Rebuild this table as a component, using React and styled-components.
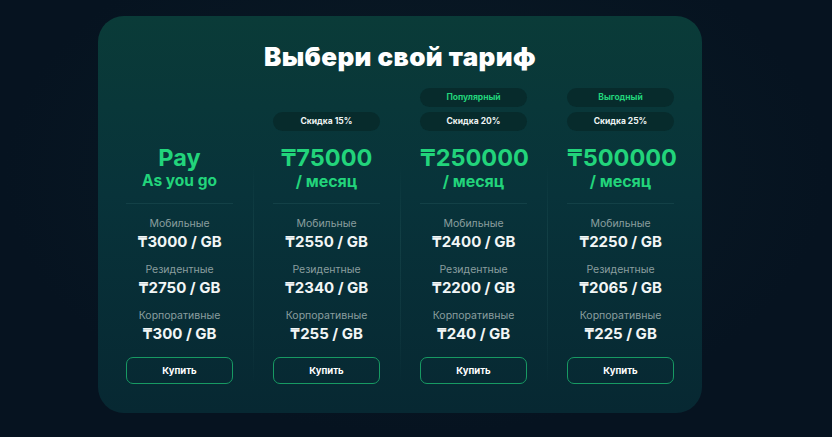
import React from "react";
import styled, { createGlobalStyle } from "styled-components";

const Global = createGlobalStyle`
  html, body { margin: 0; padding: 0; }
  body {
    background: #061423;
    font-family: Inter, "Noto Sans", "DejaVu Sans", sans-serif;
    -webkit-font-smoothing: antialiased;
  }
`;

const Page = styled.div`
  width: 832px;
  height: 437px;
  box-sizing: border-box;
  padding: 16px 0 0 98px;
  display: flex;
  justify-content: flex-start;
  align-items: flex-start;
  background: radial-gradient(ellipse at 50% 40%, #0a1c27 0%, #061320 70%);
`;

const Card = styled.section`
  width: 604px;
  height: 397px;
  box-sizing: border-box;
  border-radius: 26px;
  background: linear-gradient(180deg, #0a3b38 0%, #08333a 45%, #072832 100%);
  padding: 26px 8px 0;
  display: flex;
  flex-direction: column;
  align-items: center;
`;

const Title = styled.h1`
  margin: 0;
  font-size: 26px;
  line-height: 30px;
  font-weight: 900;
  color: #ffffff;
  letter-spacing: 0.4px;
`;

const Grid = styled.div`
  margin-top: 16px;
  display: grid;
  grid-template-columns: repeat(4, 147px);
`;

const Column = styled.div`
  display: flex;
  flex-direction: column;
  align-items: stretch;
  padding: 0 20px 0 19px;
  text-align: center;
  border-left: 1px solid transparent;
  border-image: ${(p) =>
    p.$divided
      ? "linear-gradient(180deg, transparent 0%, transparent 26%, rgba(120,200,190,0.09) 50%, rgba(120,200,190,0.06) 80%, transparent 100%) 1"
      : "none"};
`;

const Badges = styled.div`
  height: 43px;
  display: flex;
  flex-direction: column;
  justify-content: flex-end;
  gap: 5px;
`;

const Pill = styled.div`
  height: 19px;
  border-radius: 10px;
  background: #072b2c;
  color: ${(p) => (p.$accent ? "#22d47b" : "#eef4f3")};
  font-size: 8.5px;
  font-weight: 700;
  line-height: 19px;
`;

const Price = styled.div`
  margin-top: 16px;
  font-size: 23.5px;
  line-height: 22px;
  font-weight: 700;
  color: #22d47b;
`;

const Period = styled.div`
  margin-top: 3px;
  font-size: ${(p) => (p.$small ? "15.5px" : "16px")};
  line-height: 18px;
  font-weight: 700;
  color: #22d47b;
`;

const Divider = styled.div`
  margin-top: 13px;
  height: 1px;
  background: rgba(120, 200, 190, 0.1);
`;

const Features = styled.div`
  margin-top: 13px;
  display: flex;
  flex-direction: column;
  gap: 12px;
`;

const Feature = styled.div`
  display: flex;
  flex-direction: column;
  gap: 2px;
`;

const Label = styled.div`
  font-size: 10.5px;
  line-height: 14px;
  color: #8a9e9f;
`;

const Value = styled.div`
  font-size: 15px;
  line-height: 18px;
  font-weight: 700;
  color: #f2f6f6;
`;

const Buy = styled.button`
  margin-top: 14px;
  height: 27px;
  border-radius: 7px;
  border: 1.5px solid #179a63;
  background: transparent;
  color: #ffffff;
  font-family: inherit;
  font-size: 9.5px;
  font-weight: 700;
  cursor: pointer;
`;

const plans = [
  {
    badges: [],
    price: "Pay",
    period: "As you go",
    small: true,
    rows: ["₸3000 / GB", "₸2750 / GB", "₸300 / GB"],
  },
  {
    badges: [{ text: "Скидка 15%" }],
    price: "₸75000",
    period: "/ месяц",
    rows: ["₸2550 / GB", "₸2340 / GB", "₸255 / GB"],
  },
  {
    badges: [{ text: "Популярный", accent: true }, { text: "Скидка 20%" }],
    price: "₸250000",
    period: "/ месяц",
    rows: ["₸2400 / GB", "₸2200 / GB", "₸240 / GB"],
  },
  {
    badges: [{ text: "Выгодный", accent: true }, { text: "Скидка 25%" }],
    price: "₸500000",
    period: "/ месяц",
    rows: ["₸2250 / GB", "₸2065 / GB", "₸225 / GB"],
  },
];

const labels = ["Мобильные", "Резидентные", "Корпоративные"];

export default function App() {
  return (
    <>
      <Global />
      <Page>
        <Card>
          <Title>Выбери свой тариф</Title>
          <Grid>
            {plans.map((p, i) => (
              <Column key={i} $divided={i > 0}>
                <Badges>
                  {p.badges.map((b) => (
                    <Pill key={b.text} $accent={b.accent}>
                      {b.text}
                    </Pill>
                  ))}
                </Badges>
                <Price>{p.price}</Price>
                <Period $small={p.small}>{p.period}</Period>
                <Divider />
                <Features>
                  {p.rows.map((r, j) => (
                    <Feature key={j}>
                      <Label>{labels[j]}</Label>
                      <Value>{r}</Value>
                    </Feature>
                  ))}
                </Features>
                <Buy>Купить</Buy>
              </Column>
            ))}
          </Grid>
        </Card>
      </Page>
    </>
  );
}
